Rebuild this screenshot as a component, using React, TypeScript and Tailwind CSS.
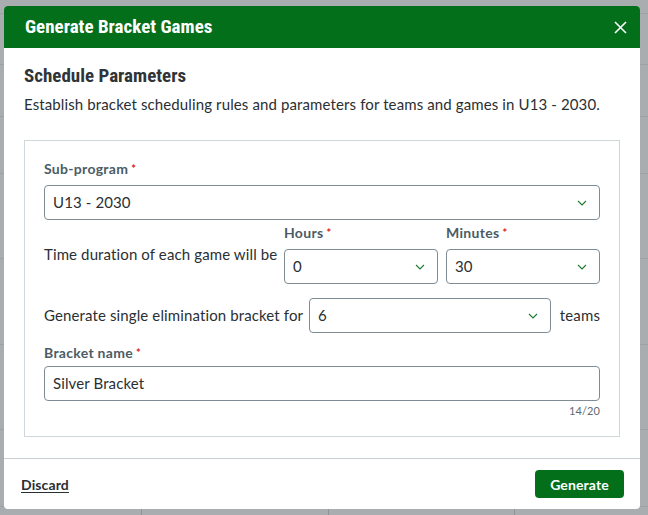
import React from "react";

const bodyFont = { fontFamily: '"Lato", "Open Sans", sans-serif' };
const headFont = {
  fontFamily: '"Roboto Condensed", "Liberation Sans Narrow", "DejaVu Sans Condensed", sans-serif',
};

const Chevron = () => (
  <svg width="10" height="6" viewBox="0 0 10 6" fill="none" className="shrink-0">
    <path d="M1 1 L5 5 L9 1" stroke="#1d7a2c" strokeWidth="1.1" />
  </svg>
);

const Req = () => <span className="text-[#e0201b] text-[11px] align-top ml-[3px]">*</span>;

const Label = ({ children }: { children: React.ReactNode }) => (
  <div className="text-[14px] leading-[18px] font-bold tracking-[0.3px] text-[#4b5c66] whitespace-nowrap">
    {children}
    <Req />
  </div>
);

const Select = ({ value, className = "" }: { value: string; className?: string }) => (
  <div
    className={`h-[35px] flex items-center justify-between border border-[#7d8c95] rounded-[4px] pl-[8px] pr-[12px] text-[15px] text-[#2a2f33] ${className}`}
  >
    <span>{value}</span>
    <Chevron />
  </div>
);

export default function App() {
  const rows = [15, 52, 53, 58, 86, 87, 86, 78];
  return (
    <div className="relative w-[648px] h-[515px] bg-[#a9adb0] overflow-hidden tracking-[0.12px]" style={bodyFont}>
      {/* backdrop table */}
      <div className="flex flex-col">
        {rows.map((h, i) => (
          <div key={i} className="border-b border-[#9ca1a4]" style={{ height: h - 1 }} />
        ))}
        <div className="grid grid-cols-[142px_187px_186px_1fr] h-[40px]">
          <div className="border-r border-[#8f9497]" />
          <div className="border-r border-[#8f9497]" />
          <div className="border-r border-[#8f9497]" />
          <div />
        </div>
      </div>

      {/* modal */}
      <div className="absolute left-[4px] top-[6px] w-[636px] h-[503px] bg-white rounded-[4px] overflow-hidden flex flex-col">
        <div className="h-[42px] shrink-0 bg-[#046f1b] flex items-center justify-between pl-[21px] pr-[13px]">
          <div className="text-white text-[19px] font-bold tracking-normal" style={headFont}>
            Generate Bracket Games
          </div>
          <svg width="13" height="13" viewBox="0 0 13 13" fill="none">
            <path d="M1 1 L12 12 M12 1 L1 12" stroke="white" strokeWidth="1.6" />
          </svg>
        </div>

        <div className="px-[20px] pt-[16px] pb-[21px]">
          <div className="text-[19px] leading-[24px] font-bold tracking-normal text-[#2f3438]" style={headFont}>
            Schedule Parameters
          </div>
          <div className="mt-[5px] text-[15px] leading-[22px] text-[#2a2f33] whitespace-nowrap">
            Establish bracket scheduling rules and parameters for teams and games in U13 - 2030.
          </div>

          <div className="mt-[25px] border border-[#cfd7db] px-[19px] pt-[19px] pb-[18px]">
            <Label>Sub-program</Label>
            <Select value="U13 - 2030" className="mt-[7px]" />

            <div className="mt-[4px] flex items-center gap-[8px]">
              <div className="text-[15px] text-[#2a2f33] w-[232px] shrink-0 whitespace-nowrap">
                Time duration of each game will be
              </div>
              <div className="flex-1">
                <Label>Hours</Label>
                <Select value="0" className="mt-[7px]" />
              </div>
              <div className="flex-1">
                <Label>Minutes</Label>
                <Select value="30" className="mt-[7px]" />
              </div>
            </div>

            <div className="mt-[14px] flex items-center gap-[9px] text-[15px] text-[#2a2f33]">
              <div className="w-[256px] shrink-0 whitespace-nowrap">Generate single elimination bracket for</div>
              <Select value="6" className="flex-1" />
              <div>teams</div>
            </div>

            <div className="mt-[11px]">
              <Label>Bracket name</Label>
            </div>
            <div className="mt-[4px] h-[35px] flex items-center border border-[#7d8c95] rounded-[4px] pl-[8px] text-[15px] text-[#2a2f33]">
              Silver Bracket
            </div>
            <div className="mt-[3px] text-right text-[11px] leading-[14px] text-[#5f6b72]">14/20</div>
          </div>
        </div>

        <div className="flex-1 border-t border-[#c9d0d4] flex items-center justify-between pl-[17px] pr-[16px]">
          <div className="text-[14px] font-bold text-[#2a2f33] underline underline-offset-2">Discard</div>
          <div className="h-[28px] w-[89px] bg-[#046f1b] rounded-[4px] flex items-center justify-center text-white text-[14px] font-bold">
            Generate
          </div>
        </div>
      </div>
    </div>
  );
}
